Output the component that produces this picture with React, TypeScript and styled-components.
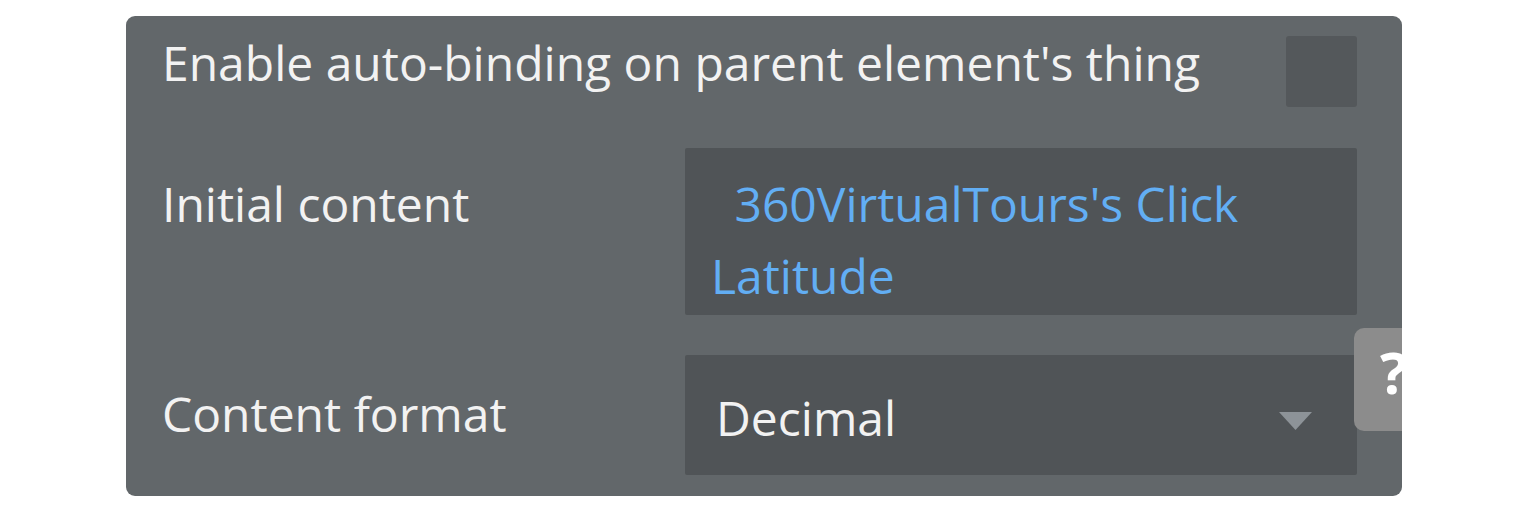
import React from 'react'
import styled, { createGlobalStyle } from 'styled-components'

const GlobalStyle = createGlobalStyle`
  html, body {
    margin: 0;
    padding: 0;
    background: #ffffff;
  }
  body {
    font-family: 'Open Sans', 'Noto Sans', sans-serif;
  }
`

const Page = styled.div`
  width: 1530px;
  height: 516px;
  padding: 16px 0 0 126px;
  box-sizing: border-box;
`

const Panel = styled.div`
  position: relative;
  width: 1276px;
  height: 480px;
  box-sizing: border-box;
  padding: 20px 45px 0 36px;
  background: #62676a;
  border-radius: 9px;
  overflow: hidden;
  display: grid;
  grid-template-columns: 523px 1fr;
  align-content: start;
  row-gap: 41px;
  color: #f2f2f2;
  font-size: 48px;
  line-height: 72px;
`

const Label = styled.div<{ $offset?: number }>`
  margin-top: ${p => p.$offset ?? 0}px;
  white-space: nowrap;
`

const CheckRow = styled.div`
  grid-column: 1 / 3;
  display: flex;
  justify-content: space-between;
  align-items: flex-start;
  height: 71px;
`

const Checkbox = styled.div`
  width: 71px;
  height: 71px;
  background: #54585b;
  border-radius: 3px;
`

const TextInput = styled.div`
  background: #505457;
  border-radius: 2px;
  padding: 20px 24px 0 26px;
  color: #62aef4;
  white-space: pre-wrap;
  text-indent: 11px;
  height: 167px;
  box-sizing: border-box;
`

const Dropdown = styled.div`
  background: #505457;
  border-radius: 2px;
  height: 120px;
  box-sizing: border-box;
  padding: 27px 45px 0 31px;
  display: flex;
  justify-content: space-between;
  align-items: flex-start;
  margin-top: -1px;
`

const Caret = styled.svg`
  width: 33px;
  height: 18px;
  margin-top: 30px;
`

const HelpTab = styled.div`
  position: absolute;
  left: 1228px;
  top: 312px;
  width: 70px;
  height: 103px;
  border-radius: 10px;
  background: #8c8c8c;
  color: #ffffff;
  font-weight: 700;
  font-size: 58px;
  line-height: 88px;
  padding-left: 26px;
  box-sizing: border-box;
`

export default function App() {
  return (
    <>
      <GlobalStyle />
      <Page>
        <Panel>
          <CheckRow>
            <Label $offset={-9}>Enable auto-binding on parent element's thing</Label>
            <Checkbox />
          </CheckRow>

          <Label $offset={20}>Initial content</Label>
          <TextInput>{" 360VirtualTours's Click Latitude"}</TextInput>

          <Label $offset={22}>Content format</Label>
          <Dropdown>
            <span>Decimal</span>
            <Caret viewBox="0 0 33 18">
              <path d="M0 0 H33 L16.5 18 Z" fill="#8d9398" />
            </Caret>
          </Dropdown>

          <HelpTab>?</HelpTab>
        </Panel>
      </Page>
    </>
  )
}
